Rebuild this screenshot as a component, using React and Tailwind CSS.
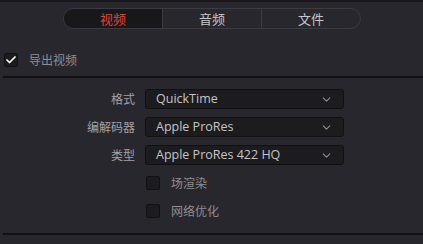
import { Check, ChevronDown } from 'lucide-react';

const cjk = { fontFamily: '"Noto Sans CJK SC", "Noto Sans", sans-serif' };

function Select({ value }) {
  return (
    <div className="w-[199px] h-[20px] rounded-[3px] bg-[#1c1c1f] border border-[#111113] flex items-center justify-between pl-[10px] pr-[10px] text-[12.5px] leading-[16px] text-[#c4c4c6]">
      <span style={{ fontFamily: '"Open Sans", "Noto Sans CJK SC", sans-serif' }}>{value}</span>
      <ChevronDown size={13} strokeWidth={2} className="text-[#8e8e92]" />
    </div>
  );
}

function Box({ checked }) {
  return (
    <div className="w-[14px] h-[14px] shrink-0 rounded-[2px] bg-[#1c1c1f] border border-[#111113] flex items-center justify-center">
      {checked && <Check size={12} strokeWidth={3.5} className="text-white" />}
    </div>
  );
}

export default function App() {
  const tabs = ['视频', '音频', '文件'];
  const rows = [['格式', 'QuickTime'], ['编解码器', 'Apple ProRes'], ['类型', 'Apple ProRes 422 HQ']];
  return (
    <div className="w-[423px] h-[244px] bg-[#28272d] border-t-2 border-[#17171a] overflow-hidden" style={cjk}>
      <div className="pt-[6px] pl-[63px]">
        <div className="w-[298px] h-[21px] rounded-full border border-[#3b3b40] flex overflow-hidden">
          {tabs.map((t, i) => (
            <div
              key={t}
              className={`flex-1 flex items-center justify-center text-[13px] leading-[16px] ${i === 0 ? 'bg-[#18181b] text-[#e0463d]' : 'text-[#c6c6c8]'} ${i > 0 ? 'border-l border-[#3b3b40]' : ''}`}
            >
              {t}
            </div>
          ))}
        </div>
      </div>
      <div className="flex items-center h-[14px] gap-[11px] pl-[4px] mt-[24px]">
        <Box checked />
        <span className="text-[12px] leading-[14px] text-[#8e8e92]">导出视频</span>
      </div>
      <div className="ml-[3px] mt-[9px] h-[2px] bg-[#111113]" />
      <div className="flex flex-col gap-[8px] mt-[11px]">
        {rows.map(([l, v]) => (
          <div key={l} className="flex items-center h-[20px]">
            <div className="w-[135px] text-right text-[12px] leading-[14px] text-[#a2a2a6]">{l}</div>
            <div className="ml-[10px]">
              <Select value={v} />
            </div>
          </div>
        ))}
      </div>
      <div className="flex flex-col gap-[14px] mt-[11px] pl-[146px]">
        {['场渲染', '网络优化'].map((t) => (
          <div key={t} className="flex items-center h-[14px] gap-[11px]">
            <Box />
            <span className="text-[12px] leading-[14px] text-[#8e8e92]">{t}</span>
          </div>
        ))}
      </div>
      <div className="ml-[3px] mt-[15px] h-[2px] bg-[#111113]" />
    </div>
  );
}
